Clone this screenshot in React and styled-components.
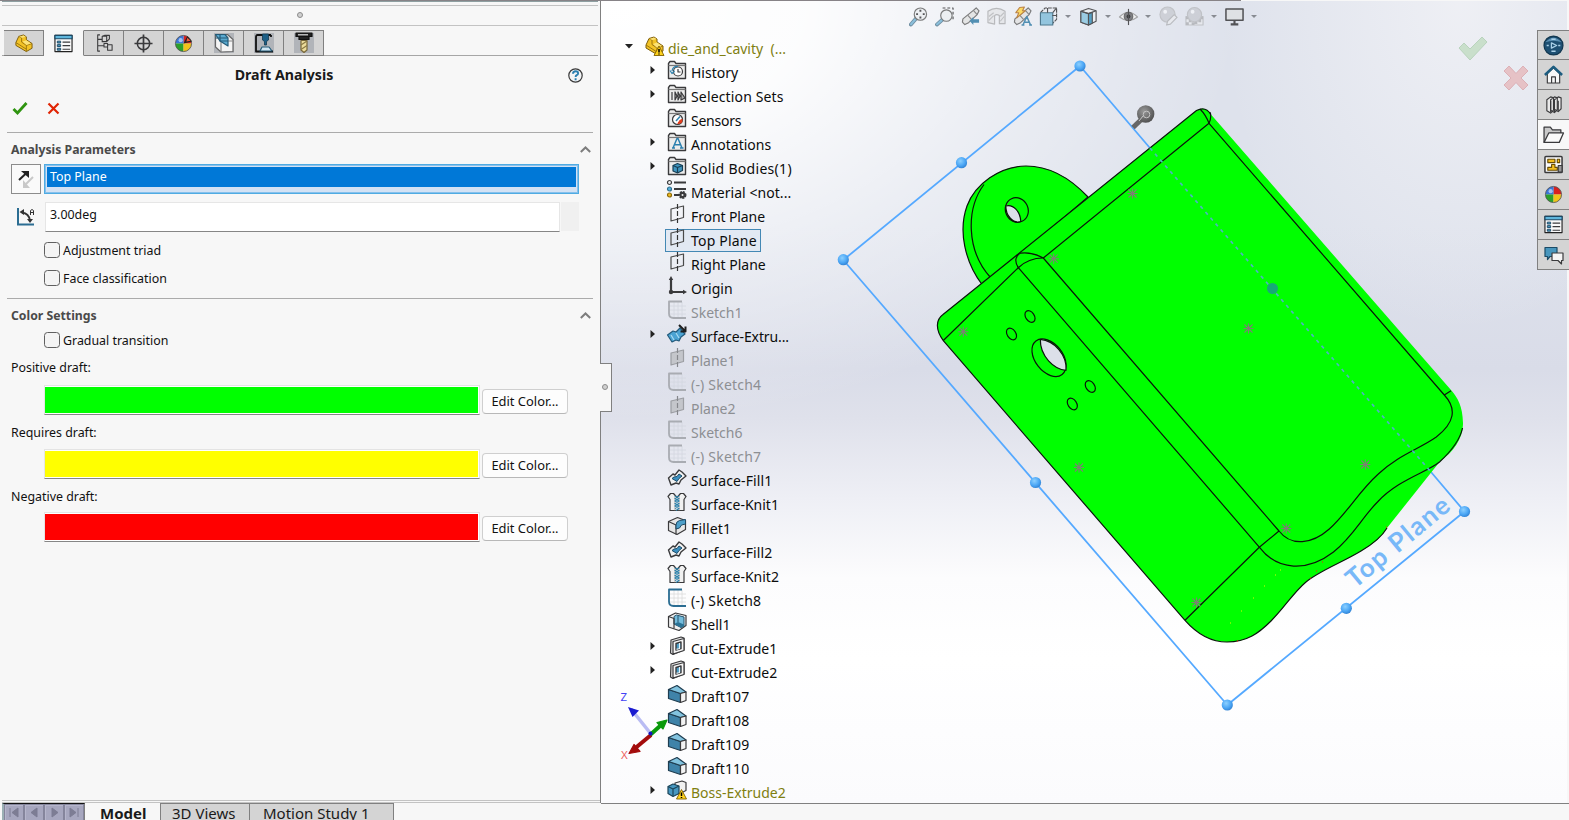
import React from "react";
import styled, { createGlobalStyle, css } from "styled-components";

const GlobalStyle = createGlobalStyle`
  *, *::before, *::after { box-sizing: border-box; }
  body { margin: 0; background: #f7f7f7; overflow: hidden; }
  svg { display: block; overflow: visible; }
`;

const FONT = `"Noto Sans", "Open Sans", sans-serif`;

/* ---------- shell ---------- */
const Shell = styled.div`
  width: 1569px;
  height: 820px;
  display: flex;
  flex-direction: column;
  background: #f7f7f7;
  font-family: ${FONT};
  font-size: 12.4px;
  color: #111;
  white-space: nowrap;
  overflow: hidden;
`;
const TopRule = styled.div`
  flex: none;
  width: 1241px;
  height: 1px;
  background: #878387;
`;
const Main = styled.div`
  flex: none;
  display: flex;
  height: 802px;
`;

/* ---------- property panel ---------- */
const Panel = styled.aside`
  flex: none;
  width: 601px;
  border-right: 1px solid #808080;
  background: #f7f7f7;
  display: flex;
  flex-direction: column;
`;
const PanelFoot = styled.div`
  height: 3px;
  margin: auto 0 0 2px;
  border-top: 1px solid #c3c3c3;
  border-bottom: 1px solid #c3c3c3;
`;
const Grip = styled.div`
  height: 25px;
  margin: 0 2px;
  border-top: 1px solid #8fa0a2;
  border-bottom: 1px solid #c3c3c3;
  display: flex;
  flex-direction: column;
  align-items: center;
`;
const GripRule = styled.div`
  width: 100%;
  height: 4px;
  border-bottom: 1px solid #c3c3c3;
`;
const Dot = styled.span`
  width: 6px;
  height: 6px;
  border-radius: 50%;
  border: 1px solid #8c8c8c;
  background: #d0d0d0;
  margin-top: ${(p) => p.$top || 0}px;
`;
const TabStrip = styled.div`
  height: 26px;
  margin: 4px 2px 0 2px;
  padding-left: 2px;
  display: flex;
  border-bottom: 1px solid #a6a6a6;
`;
const PanelTab = styled.button`
  width: 40px;
  height: 26px;
  padding: 0;
  border: 1px solid #808080;
  border-left-width: 0;
  border-bottom-color: ${(p) => (p.$active ? "#f7f7f7" : "#808080")};
  ${(p) => p.$active && "border-top-color: #f7f7f7;"}
  background: ${(p) => (p.$active ? "#f7f7f7" : "#d4d4d4")};
  display: flex;
  align-items: center;
  justify-content: center;
`;
const TitleRow = styled.div`
  height: 38px;
  padding: 0 15px 0 0;
  display: grid;
  grid-template-columns: 568px 16px;
  align-items: center;
`;
const Title = styled.h1`
  margin: 0;
  text-align: center;
  font-size: 14.2px;
  line-height: 20px;
  font-weight: 700;
  color: #1a1a1a;
`;
const Confirm = styled.div`
  height: 38px;
  padding: 7px 0 0 11px;
  display: flex;
  gap: 16px;
  align-items: flex-start;
`;
const Divider = styled.div`
  height: 1px;
  margin: ${(p) => p.$top || 0}px 7px 0;
  background: #ababab;
`;
const SectionHead = styled.div`
  height: ${(p) => p.$h}px;
  padding: ${(p) => p.$down || 0}px 9px 0 11px;
  display: flex;
  align-items: center;
  justify-content: space-between;
  font-size: 12.25px;
  font-weight: 700;
  color: #4a4a4a;
`;
const Row = styled.div`
  display: flex;
  padding-left: 11px;
  margin-top: ${(p) => p.$top || 0}px;
`;
const ReverseButton = styled.button`
  width: 30px;
  height: 30px;
  margin-right: 3px;
  padding: 0;
  border: 1px solid #8c8c8c;
  background: #fafafa;
  display: grid;
  place-items: center;
`;
const Selection = styled.div`
  width: 535px;
  height: 30px;
  border: 1px solid #4fabe2;
  box-shadow: inset 0 0 0 1px #86c0ec;
  background: #d3e2f4;
  padding: 2px;
`;
const Selected = styled.div`
  height: 20px;
  padding-left: 3px;
  line-height: 20px;
  background: #0078d7;
  color: #fff;
`;
const AngleIcon = styled.div`
  width: 34px;
  padding: 5px 0 0 5px;
`;
const Field = styled.div`
  width: 515px;
  height: 30px;
  border: 1px solid #e6e6e6;
  border-bottom-color: #868686;
  background: #fff;
  padding-left: 4px;
  line-height: 23px;
`;
const Spinner = styled.div`
  width: 18px;
  height: 29px;
  margin-left: 1px;
  background: #f0f0f0;
`;
const CheckRow = styled.label`
  display: flex;
  align-items: center;
  height: 16px;
  margin: ${(p) => p.$top}px 0 0 44px;
  gap: 3px;
`;
const Box = styled.span`
  width: 16px;
  height: 16px;
  border: 1px solid #606060;
  border-radius: 3.5px;
  background: #f4f4f4;
`;
const Label = styled.div`
  height: 18px;
  line-height: 20px;
  margin: ${(p) => p.$top}px 0 0 11px;
`;
const ColorRow = styled.div`
  display: flex;
  align-items: center;
  gap: 2px;
  margin: ${(p) => p.$top}px 0 0 44px;
  height: 30px;
`;
const Swatch = styled.div`
  width: 436px;
  height: 30px;
  border: 1px solid #e4e4e4;
  border-bottom-color: #868686;
  background: ${(p) => p.$color};
  box-shadow: inset 0 1px 0 #fff, inset 0 -1px 0 #fff, inset -1px 0 0 #fff;
`;
const EditButton = styled.button`
  width: 86px;
  height: 25px;
  margin-top: 2px;
  padding: 0;
  border: 1px solid #cfcfcf;
  border-bottom-color: #b8b8b8;
  border-radius: 4px;
  background: #fdfdfd;
  font: inherit;
  font-size: 12.9px;
  color: #111;
`;

/* ---------- graphics area ---------- */
const Viewport = styled.main`
  position: relative;
  flex: 1;
  background:
    radial-gradient(ellipse 620px 420px at 20px 0px, #ffffff 0%, rgba(255,255,255,.92) 30%, rgba(255,255,255,.4) 66%, rgba(255,255,255,0) 100%),
    radial-gradient(ellipse 240px 330px at 860px 0px, rgba(245,245,248,.7) 0%, rgba(245,245,248,0) 100%),
    linear-gradient(180deg, #dee2ec 0%, #dee2ec 28%, #d9dce8 46%, #dfe1eb 52%, #eeeff5 62%, #fcfcfd 72%, #fff 82%, #fbfbfd 100%);
  border-right: 2px solid #f7f7f7;
`;
const Scene = styled.svg`
  position: absolute;
  left: 0;
  top: 0;
  width: 968px;
  height: 801px;
`;
const Handle = styled.div`
  position: absolute;
  left: -1px;
  top: 362px;
  width: 12px;
  height: 49px;
  border: 1px solid #808080;
  border-left: 0;
  background: #f7f7f7;
  display: grid;
  place-items: center;
  padding: 0 1px 1px 0;
`;
const ViewBar = styled.div`
  position: absolute;
  left: 304px;
  top: 3px;
  height: 24px;
  display: flex;
  align-items: center;
`;
const ViewTool = styled.span`
  width: 26px;
  display: grid;
  place-items: center;
  opacity: ${(p) => (p.$dim ? 0.45 : 0.85)};
`;
const Caret = styled.span`
  width: 14px;
  display: grid;
  place-items: center;
  &::before {
    content: "";
    border: 3px solid transparent;
    border-top-color: #888b92;
    border-bottom: 0;
  }
`;
const Tree = styled.ul`
  position: absolute;
  left: 22px;
  top: 35px;
  margin: 0;
  padding: 0;
  list-style: none;
  font-size: 14px;
`;
const tone = { normal: "#0c0c0c", dim: "#8d8f93", warn: "#7f7f10" };
const Node = styled.li`
  height: 24px;
  display: flex;
  align-items: center;
  padding-left: ${(p) => (p.$root ? 0 : 23)}px;
  color: ${(p) => tone[p.$tone || "normal"]};
`;
const Twisty = styled.span`
  width: 12px;
  height: 12px;
  margin: -4px 7px 0 0;
  display: grid;
  place-items: center;
`;
const NodeBody = styled.span`
  display: flex;
  align-items: center;
  height: 23px;
  padding: 0 3px 0 1px;
  border: 1px solid transparent;
  ${(p) =>
    p.$selected &&
    css`
      border-color: #4488b4;
      background: #e2e9f3;
    `}
`;
const NodeIcon = styled.span`
  width: 20px;
  height: 20px;
  margin: -4px 4px 0 0;
`;
const NodeText = styled.span`
  line-height: 20px;
  padding-top: 1px;
  letter-spacing: ${(p) => p.$sp || 0}px;
`;
const Corner = styled.div`
  position: absolute;
  left: 857px;
  top: 34px;
  width: 72px;
  display: flex;
  align-items: flex-start;
  gap: 15px;
`;
const Lower = styled.span`
  padding-top: 29px;
`;
const TaskBar = styled.nav`
  position: absolute;
  right: -2px;
  top: 29px;
  width: 32px;
  height: 240px;
  display: flex;
  flex-direction: column;
  border: 1px solid #808080;
  border-right: 0;
  background: #808080;
  gap: 1px;
`;
const Task = styled.span`
  height: 29px;
  &:first-child { height: 28px; }
  display: grid;
  place-items: center;
  background: ${(p) => (p.$active ? "#f8f8f8" : "#d4d4d4")};
`;

/* ---------- bottom tabs ---------- */
const Bottom = styled.footer`
  flex: none;
  height: 17px;
  display: flex;
  padding-left: 2px;
  background: #f7f7f7;
  font-size: 15px;
`;
const Navs = styled.div`
  display: flex;
  width: 83px;
  border-left: 2px solid #9bb0b4;
  border-right: 1px solid #808080;
  background: #a7a7bf;
  border-top: 1px solid #111;
`;
const Nav = styled.span`
  width: 20px;
  height: 17px;
  border: 1px solid #85859c;
  box-shadow: inset 1px 1px 0 #b6b6cc;
  display: grid;
  place-items: center;
`;
const DocTab = styled.span`
  width: ${(p) => p.$w}px;
  padding-left: ${(p) => p.$pad}px;
  line-height: ${(p) => (p.$active ? 21 : 19)}px;
  color: #1a1a1a;
  background: ${(p) => (p.$active ? "#f7f7f7" : "#d4d4d4")};
  font-weight: ${(p) => (p.$active ? 700 : 400)};
  border-right: 1px solid #808080;
  border-top: ${(p) => (p.$active ? 0 : 1)}px solid #808080;
`;
const ViewportEdge = styled.span`
  flex: 1;
  margin-left: 207px;
  border-top: 1px solid #808080;
`;

/* ---------- icons ---------- */
const K = "#3a3a3c";
const I = ({ s = 20, children }) => (
  <svg width={s} height={s} viewBox="0 0 20 20" fill="none" stroke={K} strokeWidth="1.2" strokeLinejoin="round">
    {children}
  </svg>
);
const PartShape = () => (
  <>
    <path d="M2 9 5 2.500 10 1l3 2v3l6 4v5l-6 3.500L2 12z" fill="#f3c326" stroke="#7c5c0a" strokeWidth="1" />
    <path d="M5 2.500 8 4v4.500l5 3.500 6-2M13 12v6M2 9l11 7" stroke="#9b750d" strokeWidth="1" />
    <path d="M5.500 3 10 1.600 12.500 3 8.500 4zM9 8l4-1.500L18 10l-5 1.700z" fill="#fbe278" stroke="none" />
  </>
);
const BallShape = () => (
  <>
    <path d="M10 10V1.500A8.500 8.500 0 0 1 18.500 10z" fill="#d92020" stroke="none" />
    <path d="M10 10V1.500A8.500 8.500 0 0 0 1.500 10z" fill="#3a76d8" stroke="none" />
    <path d="M10 10v8.500A8.500 8.500 0 0 1 1.500 10z" fill="#2ba02b" stroke="none" />
    <path d="M10 10v8.500A8.500 8.500 0 0 0 18.500 10z" fill="#f0c419" stroke="none" />
    <circle cx="10" cy="10" r="8.500" stroke="#555" strokeWidth=".9" />
    <circle cx="7" cy="6.500" r="2.200" fill="#fff" opacity=".55" stroke="none" />
  </>
);
const ListShape = () => (
  <>
    <rect x="1" y="1.500" width="18" height="17" fill="#fafafa" stroke="#222" />
    <rect x="1" y="1.500" width="18" height="3.500" fill="#5fb6dc" stroke="#1c4a66" />
    <path d="M3.500 7.500h3.500v2H3.500zM3.500 11.200h3.500v2H3.500zM3.500 15h3.500v2H3.500z" fill="#4b9cc4" stroke="#1c4a66" strokeWidth="1" />
    <path d="M9 8.500h8M9 12.200h8M9 16h8" />
  </>
);
const Folder = ({ children }) => (
  <I>
    <path d="M1.500 18.500V3.500l1.500-2h4.500l1.500 2h9.500v15z" fill="#ececec" strokeWidth="1.400" />
    <path d="M1.500 5.500h17" stroke="#777" />
    {children}
  </I>
);
const Sketch = ({ on }) => (
  <I>
    <path d="M7 2v16M11 2v16M15 2v16M2 6h17M2 10h17M2 14h17" stroke={on ? "#dadada" : "#d3d7e0"} strokeWidth=".8" />
    <path d="M15 1.500H2v12q0 4.500 4.500 4.500H19" stroke={on ? "#2b6d92" : "#a9acb2"} strokeWidth="1.800" />
  </I>
);
const Plane = ({ dim }) => (
  <I>
    <path d="M4 5 16.500 2v11.500L4 17z" stroke={dim ? "#9c9ea3" : "#4a4a4a"} fill={dim ? "#c4c6cb" : "none"} />
    <path d="M10.500 0v20" stroke={dim ? "#85878c" : "#333"} strokeDasharray="5 2" />
  </I>
);
const Fill = () => (
  <I>
    <path d="M1.500 10 6 6l2 1 4-5 3 2 4 4-5 4-2 4-3-1-5 2z" fill="#f2f2f2" strokeWidth="1.400" />
    <path d="M5 10.500 7 9l3-.5L12 6l3 2-3 2.500-2 3z" fill="#3a8fc0" stroke="#1c4a66" strokeWidth="1" />
  </I>
);
const Knit = () => (
  <I>
    <path d="M3.500 1.500h3l3.500 4 3.500-4h3l2.500 3-2 3V18.500h-14V7.500l-2-3z" fill="#f1f1f1" />
    <path d="M8 4v14.500M12 4v14.500" stroke="#999" strokeWidth=".8" />
    <path d="m8 4 4 2.500L8 9l4 2.500L8 14l4 2.500-3 2M12 4 8 6.500 12 9l-4 2.500 4 2.500-4 2.500" stroke="#2d83ac" />
  </I>
);
const Fillet = () => (
  <I>
    <path d="m1.500 5.500 9-4 8 3v9l-8.500 5-8.500-4z" fill="#e7e7e7" />
    <path d="M1.500 5.500 9 9v9.500" />
    <path d="M9 9q0-3.500 3.500-4.500l6-1v4.500q-5 0-6 4L9 13z" fill="#4d9fc9" stroke="#1c4a66" strokeWidth="1" />
  </I>
);
const ShellIcon = () => (
  <I>
    <path d="m1.500 4.500 7-3.500 10.500 2.500v10L12 18.500 1.500 15z" fill="#f0f0f0" />
    <path d="M7 4.500 9.500 3 17 5v9l-3 1.500L7 12z" fill="#74bcdc" stroke="#25526c" strokeWidth="1" />
    <path d="M7 12l4-2 6 2.500v1.500l-3 1.500z" fill="#2b7396" stroke="none" />
    <path d="M11 4v6" stroke="#25526c" strokeWidth="1" />
    <path d="m1.500 4.500 5.500 2v10" />
  </I>
);
const Cut = () => (
  <I>
    <path d="m4 4 10-3 3 1v12L6 18.500 3.500 17z" fill="#e4e4e4" />
    <path d="M6 5.500 17 2.500v12L6 18z" fill="#f6f6f6" />
    <path d="m9 7.500 5-1.500v6.500L9 14z" fill="#4a9ac2" strokeWidth="1.400" />
    <path d="M12.500 7v5.500l-3 .8" stroke="#e4f3fa" />
  </I>
);
const Draft = () => (
  <I>
    <path d="m1.500 5.500 12 4v9l-12-4z" fill="#3f83a9" stroke="#1f3d50" />
    <path d="m1.500 5.500 8.500-4L19 8l-5.500 1.500z" fill="#82c3df" stroke="#1f3d50" />
    <path d="M13.500 9.500 19 8v8.500l-5.500 2z" fill="#f3f3f3" />
  </I>
);
const Warn = ({ x, y }) => (
  <g transform={`translate(${x} ${y})`}>
    <path d="M5 0 10 9.500H0z" fill="#ffd21c" stroke="#806000" strokeWidth=".9" />
    <path d="M5 3v3.500M5 7.500v1" stroke="#000" strokeWidth="1.500" />
  </g>
);
const ICONS = {
  part: <I><PartShape /><Warn x={10} y={10} /></I>,
  history: <Folder><circle cx="11" cy="11.500" r="4.500" fill="#fff" /><path d="M11 9v3h2.500" /><path d="M5 11q1-5 6-4.500M3 10.500l2 3 2.500-2.500" stroke="#2e83b0" /></Folder>,
  sets: <Folder><path d="M5 8v8M8 8v8l2-4zM11 8v8l2-4zM14 8v8l4-2z" fill="#aaa" /></Folder>,
  sensors: <Folder><circle cx="10.500" cy="11.500" r="5" fill="#fff" /><path d="m9 13 4-4.500" stroke="#2e83b0" strokeWidth="1.500" /><path d="M11 15.500q4 0 4-4l-2 1z" fill="#e23d1d" stroke="#e23d1d" /></Folder>,
  notes: <Folder><path d="m6 16 4-9.500h1L15 16M7.500 12.800h6M5 16h3M13 16h3.500" stroke="#2b7fae" strokeWidth="1.500" /></Folder>,
  solid: <Folder><path d="m6 9.500 4.500-2 5 2v5l-5 2.500L6 15z" fill="#3f95bf" stroke="#173e54" /><path d="m6 9.500 4.500 2 5-2M10.500 11.500V17" stroke="#173e54" /></Folder>,
  material: <I><path d="M7 2.500h12M7 9h12M7 15h5" strokeWidth="2" /><circle cx="2.500" cy="2.500" r="2" fill="#eee" /><circle cx="2.500" cy="9" r="2" fill="#58b3dd" stroke="#2d6e90" /><circle cx="2.500" cy="15" r="2" fill="#f1bd22" stroke="#8d6a0b" /><circle cx="15.500" cy="15" r="3" strokeWidth="2" strokeDasharray="2 .8" fill="#3a3a3c" /><circle cx="15.500" cy="15" r="1" fill="#eee" stroke="none" /></I>,
  plane: <Plane />,
  planeDim: <Plane dim />,
  origin: <I><path d="M4 3v13h13" strokeWidth="2.200" /><path d="M4 0 1.800 4h4.400zM20 16l-4-2.200v4.400z" fill={K} stroke="none" /><circle cx="4" cy="16" r="2.200" fill={K} stroke="none" /></I>,
  sketchDim: <Sketch />,
  sketch: <Sketch on />,
  surf: <I><path d="M.5 11 6 7l3 1 4-4 5 6-4 3-2 4-3-1-4 2z" fill="#4ba3d3" stroke="#235a7b" /><path d="m4 11 3 5M9 9l3 5" stroke="#a9dbf2" /><path d="m12 1 6 6M18.500 2.500v5h-5" stroke="#1e1e1e" strokeWidth="2" /></I>,
  fill: <Fill />,
  knit: <Knit />,
  fillet: <Fillet />,
  shell: <ShellIcon />,
  cut: <Cut />,
  draft: <Draft />,
  boss: <I><path d="m8 3 7-2 4 1.500v8L12 14 8 10z" fill="#f0f0f0" /><path d="M1 6.500 6 4l6 2v7.500l-6 3-5-3z" fill="#4797c0" stroke="#1b4459" /><path d="m1 6.500 5 2.500 6-3M6 9v7" stroke="#1b4459" /><Warn x={9.5} y={9.5} /></I>,
};

const TAB_ICONS = [
  <I s={19}><PartShape /></I>,
  <I s={19}><ListShape /></I>,
  <I s={18}><path d="M5.500 1H3v18h2.500M3 6h5M3 13h7M8 2.500h5v6H8zM10 10.500h4v4h-4zM13 8.500l3-3V1.500h-5L8 2.500M14 14.500v3.500h5v-6h-5" /></I>,
  <I s={19}><circle cx="10" cy="10" r="6.500" strokeWidth="1.600" /><path d="M10 .5v19M.5 10h19" strokeWidth="1.800" /></I>,
  <I s={19}><BallShape /><path d="m10 10 4-8 5 6z" fill="#222" stroke="none" /><path d="m13 8 1-4 3.500 3z" fill="#f05a3c" stroke="none" /></I>,
  <I s={20}><path d="M0 0h20v20H0z" fill="#b1b4b9" stroke="none" /><path d="m1.500 1.500 12 0 5.500 5v12l-12 .5-5.500-5z" fill="#f4f4f4" stroke="#666" /><path d="M7 19V8h12" stroke="#888" /><path d="M1.500 1.500h9.500l3 3.500v8L6 8z" fill="#5aa9cf" stroke="#245b77" /><path d="M6 1.500V8h8M1.500 5h12" stroke="#245b77" /></I>,
  <I s={20}><path d="M0 0h20v20H0z" fill="#b1b4b9" stroke="none" /><path d="M17 2H3.500Q2 2 2 4v14.500h17M17 2v2" stroke="#111" strokeWidth="1.800" /><path d="M8.500 1h6v6l-2 1.500V12h-2V8.500l-2-1.500z" fill="#1d5f86" stroke="#123a52" strokeWidth=".8" /><path d="m8 14 7 0 3 4H6z" fill="#cfe5f2" stroke="#245b77" /></I>,
  <I s={20}><path d="M0 0h20v20H0z" fill="#b1b4b9" stroke="none" /><path d="M2 0h16v3.500H2zM5 3.500h10v3H5z" fill="#222" stroke="#111" /><path d="M4 1.800h10" stroke="#ddd" /><path d="M7 7.500h6V17l-3 2.500L7 17z" fill="#ecdc9b" stroke="#77673b" /><path d="m7 12 6-4M7 16.500l6-4" stroke="#8c7a45" /></I>,
];

const TASK_ICONS = [
  <I s={21}><circle cx="10" cy="10" r="9" fill="#1d5073" stroke="#123850" /><path d="M2 7q8-9 16 0-8-3-16 0z" fill="#5b90b3" stroke="none" /><path d="m8 7.500 5 2.500-5 2.500z" stroke="#a9d0e7" /><path d="M3.500 10h2M14.500 10h2M8 15.500h4M8 4h4" stroke="#a9d0e7" strokeWidth="1.500" /></I>,
  <I s={19}><path d="M3.500 9v10h13V9L10 3z" fill="#f8f8f8" /><path d="M1 10.500 10 2l9 8.500" stroke="#1d5d80" strokeWidth="2.800" /><path d="M8 19v-6.500h4V19" /></I>,
  <I s={19}><path d="m3 5 4-3 3 1v13l-3 3-4-2.500zM7 5l4-3 3 1v12.500l-3 3-4-2.500zM11 5l4-3 3 1v11.500l-3 3-4-2.500z" fill="#e9e9e9" /><path d="M7 6v12M11 6v12M15 6v11" /></I>,
  <I s={21}><path d="M1 17.500V3h6l2 2.500h8v3" fill="#c9c9c9" /><path d="M1 17.500 5.500 8.500h14L15.500 17.500z" fill="#fafafa" /></I>,
  <I s={19}><rect x="1" y="1.500" width="18" height="17" rx="1" fill="#fafafa" strokeWidth="1.600" /><path d="M4 4.500h7.500v3.500H4zM14 4.500h2.500v3.500H14zM8 10h3.500v3H14v3H4v-3h4z" fill="#f3bf20" stroke="#6a4e05" /><path d="M15 11h4v7h-4z" fill="#999" /></I>,
  <I s={19}><BallShape /></I>,
  <I s={19}><ListShape /></I>,
  <I s={20}><path d="M1 2.500h12v9H6l-2.500 3v-3H1z" fill="#4796bd" stroke="#1b4b66" /><path d="M8 8h11v7.500h-1.500v3.500L14 15.500H8z" fill="#f5f5f5" /></I>,
];

const Lens = ({ x, y, r }) => (
  <>
    <path d={`M${x - r * 0.7} ${y + r * 0.7} 2 18.500`} stroke="#5a7d93" strokeWidth="4" strokeLinecap="round" />
    <path d={`M${x - r * 0.8} ${y + r * 0.8} 2.200 18.200`} stroke="#78b6d6" strokeWidth="2.200" strokeLinecap="round" />
    <circle cx={x} cy={y} r={r} fill="#eceff2" stroke="#666" />
  </>
);
const Cube = () => (
  <>
    <path d="m2 4.500 8-3 8 2.500v11L10 19l-8-3z" fill="#edf0f3" />
    <path d="M2 4.500 10 7v12l-8-3z" fill="#8dc7e1" />
    <path d="m10 7 4-1.500v11.500L10 19z" fill="#3f95bf" />
    <path d="m2 4.500 8 2.500 8-3" />
  </>
);
const Scope = () => (
  <>
    <path d="M2 12.500 13 3.500l3-2.500 3 3-2 4-9 8.500-4 2-2.500-2.500z" fill="#e3e3e3" stroke="#666" />
    <path d="m7 8.500 4.500 5M13 3.500 17 8" stroke="#777" />
  </>
);
const VIEW = [
  { i: <><Lens x={12} y={7.5} r={6.500} /><path d="M12 3v2M12 10v2M7.500 7.500h2M14.500 7.500h2" strokeWidth="2" /></> },
  { i: <><path d="M8 1h11v13" strokeDasharray="3 2" /><Lens x={12} y={9} r={6} /></> },
  { i: <><Scope /><path d="m9 14.500 4-4v2.500h6v3.500h-6V19z" fill="#377fa8" stroke="none" /></> },
  { dim: true, i: <><path d="M1 4.500q9-6 18 0v13h-6V9q-3-2-5 0v9l-7-1.500z" fill="#ddd" stroke="#777" /><path d="m2 10 5-4M2 14l5-5M14 10l4-4M14 15l4-5" stroke="#888" /></> },
  { i: <><Scope /><path d="m7 .5 5-.5-2 4h3L4 11.500 6 6H3z" fill="#ffd64a" stroke="#b4732a" /><path d="m10.500 19 4-9 4 9M12 16h5M9 19h3M17 19h3" stroke="#377fa8" strokeWidth="1.600" /></> },
  { i: <><path d="m1.500 6 5-5h12v12l-5 5" strokeDasharray="4 1" /><path d="M1.500 6h13v13h-13z" fill="#85bfdb" stroke="#35677f" /><path d="m14.500 6 4-5M9 1v5M14 9h4.500" /></>, caret: true },
  { i: <Cube />, caret: true },
  { i: <><path d="M.5 10.500Q10 1 19.500 10.500 10 18 .5 10.500z" fill="#f3f3f3" stroke="#999" /><circle cx="10" cy="10" r="4.500" fill="#6d6d70" stroke="#555" /><circle cx="10" cy="10" r="2" fill="#222" stroke="none" /><path d="M10 2v17" /></>, caret: true },
  { dim: true, i: <><circle cx="9" cy="8" r="8" fill="#b5b7bc" stroke="#999" /><circle cx="6.500" cy="5" r="2" fill="#fff" stroke="none" /><path d="m8 19 1-4 7-7 3 3-7 7z" fill="#eee" stroke="#888" /></> },
  { dim: true, i: <><path d="M1 10h18v9H1z" fill="#eee" stroke="#999" /><path d="M1 10h4v3H1zM15 10h4v3h-4zM4 13h3v3H4zM10 15h3v3h-3zM14 13h3v3h-3zM7 16h3v3H7zM1 16h3v3H1z" fill="#888" stroke="none" /><circle cx="10" cy="8" r="7.500" fill="#b5b7bc" stroke="#999" /><circle cx="8" cy="5" r="2" fill="#fff" stroke="none" /></>, caret: true },
  { i: <><path d="M1 2h18v12H1z" fill="#dfe1e3" strokeWidth="1.600" /><path d="M10 14v4M6 18.300h8" strokeWidth="2.200" /></>, caret: true },
];

/* ---------- data: name, icon, tone, expandable, letter spacing ---------- */
const TREE = [
  ["History", "history", "", true],
  ["Selection Sets", "sets", "", true, 0.15],
  ["Sensors", "sensors", "", false, -0.25],
  ["Annotations", "notes", "", true],
  ["Solid Bodies(1)", "solid", "", true, 0.3],
  ["Material <not...", "material", "", false, 0.05],
  ["Front Plane", "plane", "", false, -0.1],
  ["Top Plane", "plane", "", false, 0.2],
  ["Right Plane", "plane"],
  ["Origin", "origin", "", false, 0.1],
  ["Sketch1", "sketchDim", "dim"],
  ["Surface-Extru...", "surf", "", true, -0.12],
  ["Plane1", "planeDim", "dim"],
  ["(-) Sketch4", "sketchDim", "dim", false, 0.2],
  ["Plane2", "planeDim", "dim"],
  ["Sketch6", "sketchDim", "dim"],
  ["(-) Sketch7", "sketchDim", "dim", false, 0.2],
  ["Surface-Fill1", "fill", "", false, 0.1],
  ["Surface-Knit1", "knit"],
  ["Fillet1", "fillet", "", false, 0.15],
  ["Surface-Fill2", "fill", "", false, 0.1],
  ["Surface-Knit2", "knit"],
  ["(-) Sketch8", "sketch", "", false, 0.2],
  ["Shell1", "shell"],
  ["Cut-Extrude1", "cut", "", true],
  ["Cut-Extrude2", "cut", "", true],
  ["Draft107", "draft", "", false, 0.1],
  ["Draft108", "draft", "", false, 0.1],
  ["Draft109", "draft", "", false, 0.1],
  ["Draft110", "draft", "", false, 0.1],
  ["Boss-Extrude2", "boss", "warn", true],
];
const COLORS = [
  ["Positive draft:", "#00ff00", 10, 9],
  ["Requires draft:", "#ffff00", 8, 8],
  ["Negative draft:", "#ff0000", 8, 7],
];
const MARKS = [[1132.5, 193.5], [1053.7, 258.7], [963.3, 331.7], [1248.5, 328.5], [1079, 467.5], [1365.3, 464.5], [1286.3, 528.5], [1196.5, 602.5]];
const NODES = [[1080, 66], [961.5, 162.7], [843.3, 259.7], [1035.5, 482.5], [1227.3, 705], [1346.3, 608.3], [1464.5, 511.5]];
const HOLES = [[1030, 316.5], [1011.5, 334], [1090.3, 386.5], [1072.3, 404]];

const ExpandMark = ({ open }) => (
  <svg width="8" height="8" viewBox="0 0 8 8">
    <path d={open ? "M0 2h8L4 6.500z" : "M2.500 0l4.500 4-4.500 4z"} fill="#222" />
  </svg>
);
const Chevron = () => (
  <svg width="11" height="7" viewBox="0 0 11 7" fill="none" stroke="#7d7d7d" strokeWidth="2">
    <path d="m.8 6 4.700-4.500L10.200 6" />
  </svg>
);

const Model = () => (
  <Scene viewBox="601 1 968 801" fill="none" stroke="#0a140a" strokeWidth="1.200" strokeLinejoin="round">
    <defs>
      <radialGradient id="node" cx=".4" cy=".35" r=".7">
        <stop offset="0" stopColor="#8cd0ff" />
        <stop offset=".6" stopColor="#4ba6f5" />
        <stop offset="1" stopColor="#2f7fd0" />
      </radialGradient>
      <radialGradient id="probe" cx=".4" cy=".35" r=".7">
        <stop offset="0" stopColor="#999" />
        <stop offset="1" stopColor="#4d4d4d" />
      </radialGradient>
    </defs>
    <path d="M1149.500 147.500 1080 66 843.300 260 1227.300 705 1464.500 511.500 1431 472" stroke="#55a9ff" strokeWidth="1.800" />

    <path d="M982 284.500C965 262 958 231 967 206 975 184 1000 166 1026 166c26 0 46 14 62 31L1018 257z" fill="#0f0" />
    <path d="M984 184.500c-18 24-18 66 6.500 93" />
    <ellipse cx="1016.800" cy="210" rx="11.300" ry="12.500" transform="rotate(-25 1016.800 210)" />
    <path d="M1005.800 206c8-2 14.500 6 15 15.500-8 2.500-15-6-15-15.500z" fill="#dcdfe9" />

    <path
      d="M943.300 340.700 1185 620.300C1198 635 1212 642 1227 642c20 0 32-9 44-21 14-14 22-28 35-39 13-11 37-20 55-31 12-7 20-13 26-23L1439.500 462c14-10 24-24 23.500-39-.5-17-5-25-12-33L1211 114.500c-4-6.500-9-7-14.500-4L943 314.500c-7 5-8 15 .3 26.200z"
      fill="#0f0"
      stroke="none"
    />
    <path d="M1211 114.500c-4-6.500-9-7-14.500-4L943 314.500c-7 5-8 15 .3 26.200L1185 620.300C1198 635 1212 642 1227 642c20 0 32-9 44-21 14-14 22-28 35-39 13-11 37-20 55-31 12-7 20-13 26-23" />
    <path d="M1462.500 428c-2.500 12-10 22-23 34-12 10-42 18-62 40-16 16-24 34-44 50-26 20-56 19-74-4.700L1018.300 267.700 943.300 340.500" />
    <path d="M1209 123.300 1444.300 395c13 14 10 28-8 42-17 12-38 18-58 37-20 18-31 39-49 55-17 15-38 18-50.300 2L1043.300 258z" />
    <path d="m1444.300 395 6.700-4.300M1185 620.300l74.300-73 19.700-16.300" />
    <path d="M1018.300 267.700c-4-6-3-12 2-14.500 7-1 16 1 23 4.800-9 0-18 3-25 9.700M1200 109c4 4 7 9 9 14.300 2-4 2-8 1-11" />

    <ellipse cx="1049" cy="357.700" rx="21.300" ry="13.800" transform="rotate(52 1049 357.700)" />
    <path d="M1040.300 339.300c14 1 27 16 25.700 31-12-1-26-14-25.700-31z" fill="#dcdfe9" />
    {HOLES.map(([x, y]) => (
      <ellipse key={x} cx={x} cy={y} rx="6.400" ry="4.300" transform={`rotate(56 ${x} ${y})`} />
    ))}

    <path d="M1150 148 1431 472" stroke="#4cb4c0" strokeWidth="1.700" strokeDasharray="3.500 4.200" />
    {MARKS.map(([x, y]) => (
      <path key={x} transform={`translate(${x} ${y})`} d="M-5 0H5M0-5V5M-4-4 4 4M4-4-4 4" stroke="#7d7f74" strokeWidth="1.100" />
    ))}
    {NODES.map(([x, y]) => (
      <circle key={x} cx={x} cy={y} r="5.600" fill="url(#node)" stroke="none" />
    ))}
    <circle cx="1272.500" cy="288.500" r="5.500" fill="#18a878" stroke="none" />
    <path d="m1144 117-11 10.500" stroke="#666" strokeWidth="5" />
    <circle cx="1145.700" cy="114" r="8.700" fill="url(#probe)" stroke="none" />
    <circle cx="1146.500" cy="114.500" r="3.300" stroke="#c4c4c4" strokeWidth="1" />
    <path d="m1143 116-4 5" stroke="#c4c4c4" strokeWidth="1" />
    <path d="M1280 570h1M1275 575h1M1264 586h1M1253 598h1M1241 611h1M1230 623h1" stroke="#d8ff00" strokeWidth="1" />
    <path d="M1322 562h1M1316 571h1M1310 578h1M1237 641h1M1386 527h1" stroke="#f20" strokeWidth="1" />
    <text
      transform="translate(1355 589) rotate(-39.700)"
      textLength="126"
      fontFamily="Lato, sans-serif"
      fontSize="26"
      fontWeight="700"
      fill="#78b8f8"
      stroke="none"
    >
      Top Plane
    </text>

    <path d="m651 734-20-25" stroke="#b9bcf3" strokeWidth="3.500" />
    <path d="m628 707 11 3.500-6.500 6.500z" fill="#1a1ad0" stroke="none" />
    <path d="m650 735 10-9" stroke="#0a9a0a" strokeWidth="4" />
    <path d="m667 720-4 9-6-6.500z" fill="#0a9a0a" stroke="#0a9a0a" />
    <path d="m651 735-18 15" stroke="#a30c0c" strokeWidth="4" />
    <path d="m629 753.500 5-9 6 7z" fill="#a30c0c" stroke="#a30c0c" />
    <circle cx="650.500" cy="733.500" r="2" fill="#1414c0" stroke="none" />
    <text x="620.500" y="701" fontFamily={FONT} fontSize="11.500" fill="#4343f5" stroke="none">Z</text>
    <text x="621" y="759" fontFamily={FONT} fontSize="11.500" fill="#ee6262" stroke="none">X</text>
  </Scene>
);

export default function App() {
  return (
    <Shell>
      <GlobalStyle />
      <TopRule />
      <Main>
        <Panel>
          <Grip>
            <GripRule />
            <Dot $top={6} />
          </Grip>
          <TabStrip>
            {TAB_ICONS.map((icon, i) => (
              <PanelTab key={i} $active={i === 1}>{icon}</PanelTab>
            ))}
          </TabStrip>
          <TitleRow>
            <Title>Draft Analysis</Title>
            <svg width="15" height="15" viewBox="0 0 15 15">
              <circle cx="7.500" cy="7.500" r="6.700" fill="#f2f4f6" stroke="#3a3a3a" strokeWidth="1.200" />
              <path d="M5 5.800q0-2.600 2.600-2.600 2.500 0 2.500 2 0 1.300-1.400 2-1.100.6-1.100 1.800M7.600 10.300v2" fill="none" stroke="#2a7fb0" strokeWidth="1.900" />
            </svg>
          </TitleRow>
          <Confirm>
            <svg width="18" height="14" viewBox="0 0 18 14">
              <path d="m2.500 8 4 4L15.500 2" fill="none" stroke="#2f9410" strokeWidth="2.800" />
            </svg>
            <svg width="16" height="14" viewBox="0 0 16 14">
              <path d="m3.500 2.500 10 10m0-10-10 10" fill="none" stroke="#e02404" strokeWidth="2.200" />
            </svg>
          </Confirm>
          <Divider />
          <SectionHead $h={31} $down={2}>
            Analysis Parameters
            <Chevron />
          </SectionHead>
          <Row>
            <ReverseButton>
              <svg width="18" height="20" viewBox="0 0 18 20" fill="none">
                <path d="m2 11 8-7.500" stroke="#222" strokeWidth="2" />
                <path d="M4 2h8v7z" fill="#222" />
                <path d="m16 8-7 7" stroke="#c8c8c8" strokeWidth="2" />
                <path d="M6 11v8h7z" fill="#c8c8c8" />
              </svg>
            </ReverseButton>
            <Selection>
              <Selected>Top Plane</Selected>
            </Selection>
          </Row>
          <Row $top={8}>
            <AngleIcon>
              <svg width="19" height="19" viewBox="0 0 19 19" fill="none">
                <path d="M2 1v16.500h16" stroke="#2b6d92" strokeWidth="2" />
                <path d="M6 5.500q7 1 8 8" stroke="#333" strokeWidth="1.800" />
                <path d="m3.500 5 4.500-3v6zM11 12h6l-3 4z" fill="#333" />
                <path d="M14.500 8V3.500q1.500-2 3 0V8M14.500 5.500h3" stroke="#333" />
              </svg>
            </AngleIcon>
            <Field>3.00deg</Field>
            <Spinner />
          </Row>
          <CheckRow $top={10}><Box />Adjustment triad</CheckRow>
          <CheckRow $top={12}><Box />Face classification</CheckRow>
          <Divider $top={12} />
          <SectionHead $h={33}>
            Color Settings
            <Chevron />
          </SectionHead>
          <CheckRow $top={0}><Box />Gradual transition</CheckRow>
          {COLORS.map(([label, color, a, b]) => (
            <React.Fragment key={label}>
              <Label $top={a}>{label}</Label>
              <ColorRow $top={b}>
                <Swatch $color={color} />
                <EditButton>Edit Color...</EditButton>
              </ColorRow>
            </React.Fragment>
          ))}
          <PanelFoot />
        </Panel>

        <Viewport>
          <Model />
          <Handle><Dot /></Handle>
          <ViewBar>
            {VIEW.map((t, i) => (
              <React.Fragment key={i}>
                <ViewTool $dim={t.dim}><I s={19}>{t.i}</I></ViewTool>
                {t.caret && <Caret />}
              </React.Fragment>
            ))}
          </ViewBar>
          <Tree>
            <Node $root $tone="warn">
              <Twisty><ExpandMark open /></Twisty>
              <NodeBody>
                <NodeIcon>{ICONS.part}</NodeIcon>
                <NodeText>die_and_cavity&nbsp; (...</NodeText>
              </NodeBody>
            </Node>
            {TREE.map(([name, icon, t, arrow, sp]) => (
              <Node key={name} $tone={t || "normal"}>
                <Twisty>{arrow && <ExpandMark />}</Twisty>
                <NodeBody $selected={name === "Top Plane"}>
                  <NodeIcon>{ICONS[icon]}</NodeIcon>
                  <NodeText $sp={sp}>{name}</NodeText>
                </NodeBody>
              </Node>
            ))}
          </Tree>
          <Corner>
            <svg width="30" height="27" viewBox="0 0 30 27">
              <path d="m1 13 5-5 6 6L24 2l5 5-17 18z" fill="#c9dfcb" stroke="#b9d3bd" />
            </svg>
            <Lower>
              <svg width="26" height="28" viewBox="0 0 26 28">
                <path d="m6 2 7 7.500L20 2l5 5-7 7 7 7-5 5-7-7.500L6 26l-5-5 7-7-7-7z" fill="#e6c2c6" stroke="#dcb0b6" />
              </svg>
            </Lower>
          </Corner>
          <TaskBar>
            {TASK_ICONS.map((icon, i) => (
              <Task key={i} $active={i === 3}>{icon}</Task>
            ))}
          </TaskBar>
        </Viewport>
      </Main>
      <Bottom>
        <Navs>
          {["M5 2v9M13 2v9L7 6.500z", "M12 2v9L6 6.500z", "M7 2v9l6-4.500z", "M13 2v9M5 2v9l6-4.500z"].map((d) => (
            <Nav key={d}>
              <svg width="18" height="13" viewBox="0 0 18 13">
                <path d={d} fill="#7d7d94" stroke="#7d7d94" />
              </svg>
            </Nav>
          ))}
        </Navs>
        <DocTab $active $w={76} $pad={15}>Model</DocTab>
        <DocTab $w={89} $pad={11}>3D Views</DocTab>
        <DocTab $w={144} $pad={13}>Motion Study 1</DocTab>
        <ViewportEdge />
      </Bottom>
    </Shell>
  );
}
